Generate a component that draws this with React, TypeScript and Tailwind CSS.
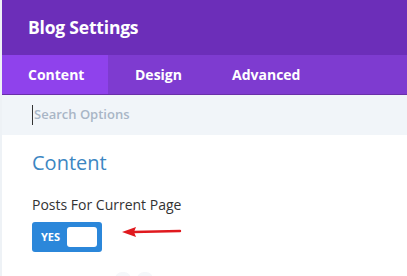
export default function App() {
  return (
    <div className="h-[276px] w-[407px] overflow-hidden bg-[#eef2f6] pl-[2px] font-['Open_Sans',sans-serif]">
      <div className="flex h-full flex-col bg-white">
        {/* header */}
        <div className="flex h-[55px] items-center bg-[#6c2eb9] pl-[26px]">
          <h1 className="text-[17.5px] font-bold tracking-[-0.2px] text-white">Blog Settings</h1>
        </div>

        {/* tabs */}
        <div className="flex h-[40px] border-b border-[#6a2fa8] bg-[#7e3bd0] text-[14px] font-bold text-white">
          <div className="flex w-[106px] items-center bg-[#8f42ec] pl-[26px]">Content</div>
          <div className="flex w-[124px] items-center pl-[27px]">Design</div>
          <div className="flex items-center">Advanced</div>
        </div>

        {/* search */}
        <div className="flex h-[40px] items-center bg-[#f1f5f9] pl-[30px]">
          <span className="mr-[1px] h-[20px] w-px bg-[#333]" />
          <span className="text-[13px] font-semibold text-[#a9b6c6]">Search Options</span>
        </div>

        {/* content */}
        <div className="relative flex-1 pl-[30px] pt-[14px]">
          <h2 className="text-[20px] leading-[28px] text-[#3c86c2]">Content</h2>
          <div className="mt-[18px] text-[14px] leading-[20px] text-[#333]">Posts For Current Page</div>
          <div className="mt-[7px] flex items-center">
            <div className="flex h-[30px] w-[70px] items-center justify-between rounded-[3px] bg-[#2b87da] pl-[9px] pr-[5px]">
              <span className="text-[11px] font-bold text-white">YES</span>
              <span className="h-[20px] w-[30px] rounded-[3px] bg-white" />
            </div>
            <svg width="62" height="14" viewBox="0 0 62 14" className="ml-[19px] -mt-[10px]">
              <path d="M12 7 L59 6" stroke="#e0191e" strokeWidth="2.4" strokeLinecap="round" />
              <path d="M1 7 L15 2 L13 7 L15 12 Z" fill="#e0191e" />
            </svg>
          </div>
          <div className="absolute bottom-[-10px] left-[113px] flex gap-[6px]">
            <span className="h-[14px] w-[16px] rounded-full bg-[#f5f7fa]" />
            <span className="h-[14px] w-[16px] rounded-full bg-[#f5f7fa]" />
          </div>
        </div>
      </div>
    </div>
  )
}
